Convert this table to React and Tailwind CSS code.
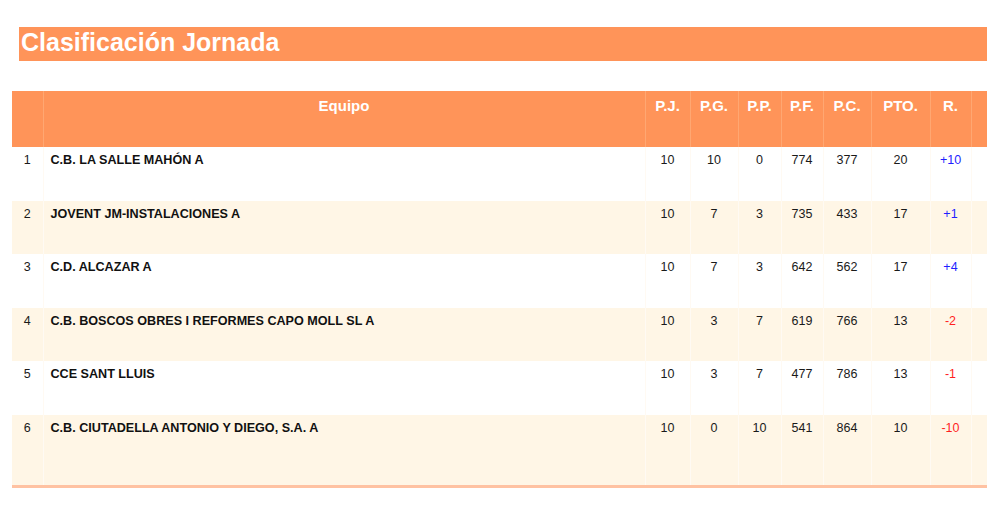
const COLS = [31, 602, 45, 48, 43, 42, 48, 59, 41, 16];

const HEADERS = ['', 'Equipo', 'P.J.', 'P.G.', 'P.P.', 'P.F.', 'P.C.', 'PTO.', 'R.', ''];

const ROWS = [
  { pos: 1, team: 'C.B. LA SALLE MAHÓN A', pj: 10, pg: 10, pp: 0, pf: 774, pc: 377, pto: 20, r: '+10', h: 54 },
  { pos: 2, team: 'JOVENT JM-INSTALACIONES A', pj: 10, pg: 7, pp: 3, pf: 735, pc: 433, pto: 17, r: '+1', h: 53 },
  { pos: 3, team: 'C.D. ALCAZAR A', pj: 10, pg: 7, pp: 3, pf: 642, pc: 562, pto: 17, r: '+4', h: 54 },
  { pos: 4, team: 'C.B. BOSCOS OBRES I REFORMES CAPO MOLL SL A', pj: 10, pg: 3, pp: 7, pf: 619, pc: 766, pto: 13, r: '-2', h: 53 },
  { pos: 5, team: 'CCE SANT LLUIS', pj: 10, pg: 3, pp: 7, pf: 477, pc: 786, pto: 13, r: '-1', h: 54 },
  { pos: 6, team: 'C.B. CIUTADELLA ANTONIO Y DIEGO, S.A. A', pj: 10, pg: 0, pp: 10, pf: 541, pc: 864, pto: 10, r: '-10', h: 71 },
];

export default function App() {
  return (
    <div className="w-[1000px] h-[510px] bg-white pt-[27px] font-['Liberation_Sans',Arial,sans-serif]">
      <div className="ml-[19px] w-[968px] h-[34px] bg-[#ff9459] pl-[2px] text-white font-bold text-[25px] leading-[30px]">
        Clasificación Jornada
      </div>

      <table className="mt-[30px] ml-[12px] w-[975px] table-fixed border-collapse">
        <colgroup>
          {COLS.map((w, i) => <col key={i} style={{ width: w }} />)}
        </colgroup>
        <thead>
          <tr className="h-[56px] bg-[#ff9459]">
            {HEADERS.map((h, i) => (
              <th key={i}
                  className="align-top pt-[6px] text-center text-white font-bold text-[15px] leading-[17px] border-r border-[#ffa772] last:border-r-0">
                {h}
              </th>
            ))}
          </tr>
        </thead>
        <tbody>
          {ROWS.map((row, i) => {
            const bg = i % 2 === 1 ? 'bg-[#fff6e6]' : 'bg-white';
            const rColor = row.r.startsWith('+') ? 'text-[#1f1fff]' : 'text-[#ff1f1f]';
            const num = 'align-top pt-[6px] text-center text-[12.5px] leading-[14px] text-[#1a1a1a] border-r border-[#fffaf3]';
            return (
              <tr key={row.pos} className={`${bg} ${i === ROWS.length - 1 ? 'border-b-[3px] border-[#ffc2a2]' : ''}`}
                  style={{ height: row.h }}>
                <td className={num}>{row.pos}</td>
                <td className="align-top pt-[6px] pl-[7px] text-left font-bold text-[12.6px] leading-[14px] text-[#111] border-r border-[#fffaf3]">
                  {row.team}
                </td>
                <td className={num}>{row.pj}</td>
                <td className={num}>{row.pg}</td>
                <td className={num}>{row.pp}</td>
                <td className={num}>{row.pf}</td>
                <td className={num}>{row.pc}</td>
                <td className={num}>{row.pto}</td>
                <td className={`align-top pt-[6px] text-center text-[12.5px] leading-[14px] border-r border-[#fffaf3] ${rColor}`}>{row.r}</td>
                <td></td>
              </tr>
            );
          })}
        </tbody>
      </table>
    </div>
  );
}
